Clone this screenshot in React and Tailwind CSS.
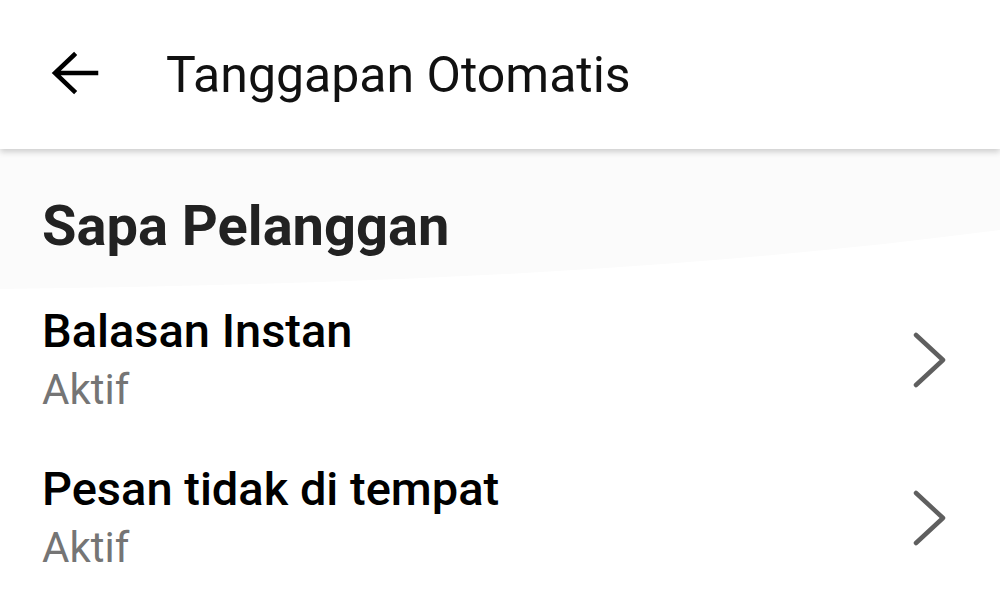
// Auto-reply settings screen
function Chevron() {
  return (
    <svg width="36" height="56" viewBox="0 0 36 56" fill="none" className="shrink-0">
      <path d="M4 3 L31 28 L4 53" stroke="#5f5f5f" strokeWidth="4.5" strokeLinecap="round" strokeLinejoin="round" />
    </svg>
  );
}

function SettingRow({ title, status }) {
  return (
    <div className="flex items-center justify-between pl-[42px] pr-[52px] pt-[22px] pb-[20px]">
      <div className="flex flex-col">
        <span className="text-[47px] leading-[58px] font-medium text-black">{title}</span>
        <span className="mt-[2px] text-[42px] leading-[56px] text-[#757575]">{status}</span>
      </div>
      <Chevron />
    </div>
  );
}

export default function App() {
  const rows = [
    { title: "Balasan Instan", status: "Aktif" },
    { title: "Pesan tidak di tempat", status: "Aktif" },
  ];

  return (
    <div className="w-[1000px] h-[606px] overflow-hidden bg-white font-['Roboto',sans-serif] relative">
      {/* Header */}
      <div className="relative z-10 h-[149px] bg-white flex items-center shadow-[0_3px_6px_rgba(0,0,0,0.18)]">
        <svg width="50" height="48" viewBox="0 0 50 48" fill="none" className="ml-[50px]">
          <path d="M46 22 H8 M24 4 L5 22 L24 40" stroke="#000" strokeWidth="4.5" strokeLinecap="square" />
        </svg>
        <h1 className="ml-[66px] text-[50px] text-[#111] font-normal leading-none">Tanggapan Otomatis</h1>
      </div>

      {/* Content */}
      <div className="relative">
        <svg className="absolute inset-x-0 top-0" width="1000" height="150" viewBox="0 0 1000 150" preserveAspectRatio="none">
          <path d="M0 0 H1000 V81 C700 120 400 135 0 140 Z" fill="#fbfbfb" />
        </svg>
        <div className="relative">
          <h2 className="pl-[42px] pt-[45px] pb-[22px] text-[56px] leading-[64px] font-bold text-[#222]">Sapa Pelanggan</h2>
          {rows.map(r => (
            <SettingRow key={r.title} title={r.title} status={r.status} />
          ))}
        </div>
      </div>
    </div>
  );
}
